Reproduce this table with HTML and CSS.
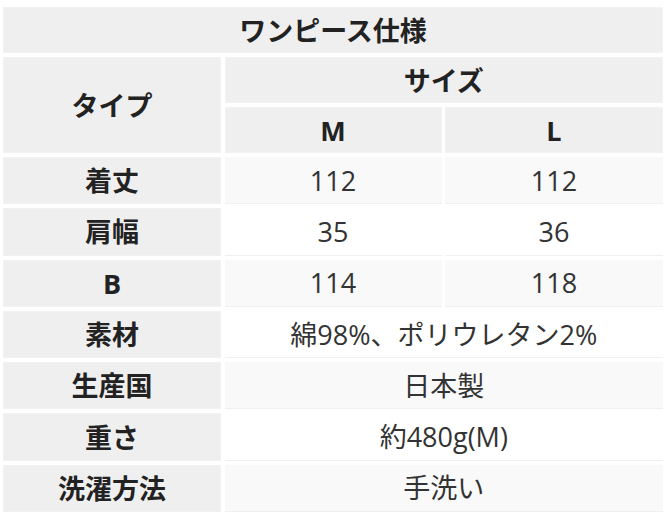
FILE: index.html
```html
<!DOCTYPE html>
<html lang="ja">
<head>
<meta charset="utf-8">
<link rel="stylesheet" href="styles.css">
</head>
<body>
<div class="spec">
  <div class="cell head title">ワンピース仕様</div>
  <div class="cell head type">タイプ</div>
  <div class="cell head size">サイズ</div>
  <div class="cell head">M</div>
  <div class="cell head">L</div>

  <div class="cell head">着丈</div>
  <div class="cell val odd">112</div>
  <div class="cell val odd">112</div>

  <div class="cell head">肩幅</div>
  <div class="cell val">35</div>
  <div class="cell val">36</div>

  <div class="cell head">B</div>
  <div class="cell val odd">114</div>
  <div class="cell val odd">118</div>

  <div class="cell head">素材</div>
  <div class="cell val wide">綿98%、ポリウレタン2%</div>

  <div class="cell head">生産国</div>
  <div class="cell val odd wide">日本製</div>

  <div class="cell head">重さ</div>
  <div class="cell val wide">約480g(M)</div>

  <div class="cell head">洗濯方法</div>
  <div class="cell val odd wide">手洗い</div>
</div>
</body>
</html>
```

FILE: styles.css
```css
html, body {
  margin: 0;
  padding: 0;
  background: #ffffff;
}

body {
  font-family: "Open Sans", "Noto Sans CJK JP", sans-serif;
  color: #333333;
}

.spec {
  display: grid;
  grid-template-columns: 218px 217px 218px;
  grid-template-rows: 46px 46px 46px repeat(7, 47.3px);
  gap: 4px 3.5px;
  padding: 7px 3px 0 3px;
  width: 660px;
}

.cell {
  display: flex;
  align-items: center;
  justify-content: center;
  font-size: 27px;
  line-height: 1;
  box-sizing: border-box;
}

.head {
  background: #efefef;
  color: #222222;
  font-weight: 700;
  border: 1px solid #f2f2f2;
}

.title {
  grid-column: 1 / 4;
}

.type {
  grid-row: 2 / 4;
}

.size {
  grid-column: 2 / 4;
}

.val {
  background: #ffffff;
  font-weight: 400;
  border-bottom: 1px solid #f0f0f0;
}

.val.odd {
  background: #f9f9f9;
}

.wide {
  grid-column: 2 / 4;
}
```
